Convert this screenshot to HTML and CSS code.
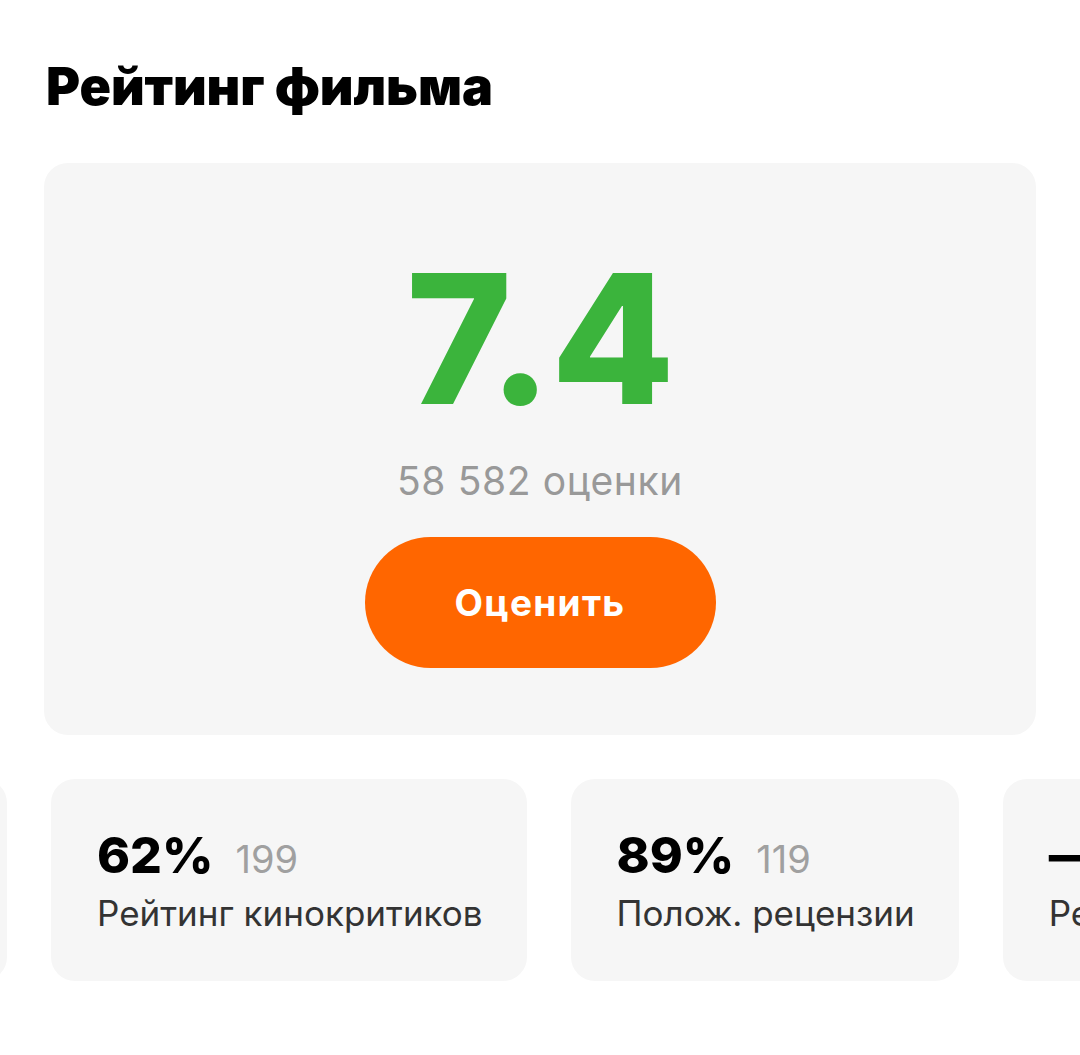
FILE: index.html
```html
<!DOCTYPE html>
<html lang="ru">
<head>
<meta charset="utf-8">
<title>Рейтинг фильма</title>
<link rel="stylesheet" href="styles.css">
</head>
<body>
<main class="page">
  <h2 class="title">Рейтинг фильма</h2>
  <section class="main-card">
    <div class="score">7.4</div>
    <div class="votes">58 582 оценки</div>
    <button class="rate-btn">Оценить</button>
  </section>
  <div class="stats-row">
    <div class="stat stat-partial"></div>
    <div class="stat">
      <div class="stat-top"><span class="stat-value">62%</span><span class="stat-count">199</span></div>
      <div class="stat-label">Рейтинг кинокритиков</div>
    </div>
    <div class="stat">
      <div class="stat-top"><span class="stat-value">89%</span><span class="stat-count">119</span></div>
      <div class="stat-label">Полож. рецензии</div>
    </div>
    <div class="stat">
      <div class="stat-top"><span class="stat-value">—</span></div>
      <div class="stat-label">Рейтинг ожидания</div>
    </div>
  </div>
</main>
</body>
</html>
```

FILE: styles.css
```css
html, body {
  margin: 0;
  padding: 0;
  background: #ffffff;
}

body {
  font-family: Inter, "Noto Sans", sans-serif;
  color: #000;
  width: 1080px;
  height: 1055px;
  overflow: hidden;
}

.page {
  padding-top: 55px;
}

.title {
  margin: 0 0 44px 46px;
  font-size: 52px;
  line-height: 64px;
  font-weight: 900;
  letter-spacing: -0.1px;
}

.main-card {
  margin: 0 44px;
  width: 992px;
  box-sizing: border-box;
  height: 572px;
  background: #f6f6f6;
  border-radius: 24px;
  display: flex;
  flex-direction: column;
  align-items: center;
  padding-top: 86px;
}

.score {
  font-size: 180px;
  line-height: 180px;
  font-weight: 800;
  color: #3bb43c;
  letter-spacing: -1px;
}

.votes {
  margin-top: 30px;
  font-size: 39px;
  line-height: 44px;
  color: #999999;
  font-weight: 400;
  letter-spacing: 0.6px;
}

.rate-btn {
  margin-top: 34px;
  width: 351px;
  height: 131px;
  border: none;
  border-radius: 66px;
  background: #ff6600;
  color: #ffffff;
  font-family: inherit;
  font-size: 37px;
  font-weight: 700;
  letter-spacing: 1.3px;
  cursor: pointer;
}

.stats-row {
  margin-top: 44px;
  display: flex;
  gap: 44px;
  white-space: nowrap;
}

.stat {
  flex: none;
  height: 202px;
  box-sizing: border-box;
  padding: 48px 44px 0 46px;
  background: #f6f6f6;
  border-radius: 24px;
}

.stat-partial {
  width: 300px;
  margin-left: -293px;
}

.stat-top {
  display: flex;
  align-items: baseline;
  gap: 22px;
  height: 56px;
}

.stat-value {
  font-size: 50px;
  line-height: 56px;
  font-weight: 800;
  color: #000;
}

.stat-count {
  font-size: 38px;
  line-height: 56px;
  color: #a0a0a0;
  font-weight: 400;
}

.stat-label {
  margin-top: 8px;
  font-size: 35px;
  line-height: 44px;
  color: #333333;
}
```
